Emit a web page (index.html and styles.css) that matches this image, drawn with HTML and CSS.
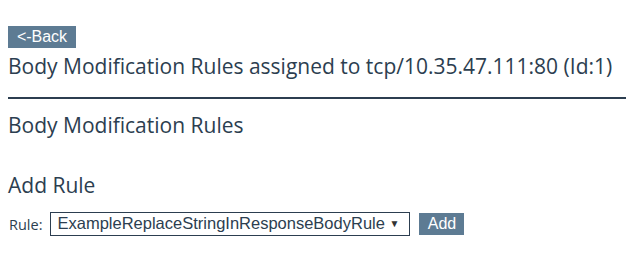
FILE: index.html
```html
<!DOCTYPE html>
<html>
<head>
<meta charset="utf-8">
<link rel="stylesheet" href="styles.css">
</head>
<body>
<div class="page">
  <div class="top"><button class="btn back">&lt;-Back</button></div>
  <h1 class="title">Body Modification Rules assigned to tcp/10.35.47.111:80 (Id:1)</h1>
  <div class="rule-line"></div>
  <h2 class="section">Body Modification Rules</h2>
  <h2 class="section add-title">Add Rule</h2>
  <div class="form-row">
    <label class="lbl">Rule:</label>
    <div class="select"><span class="sel-text">ExampleReplaceStringInResponseBodyRule</span><span class="arrow">▼</span></div>
    <button class="btn add">Add</button>
  </div>
</div>
</body>
</html>
```
FILE: styles.css
```css
html, body { margin: 0; padding: 0; background: #fff; }
body { font-family: "Open Sans", sans-serif; color: #2c3e50; }
.page { padding: 26px 0 0 8px; }
.top { display: flex; }
.btn {
  font-family: "Liberation Sans", Arial, sans-serif;
  background: #5d7b93;
  color: #fff;
  border: 0;
  border-radius: 0;
  height: 22px;
  padding: 0;
  font-size: 16px;
  line-height: 22px;
  cursor: pointer;
}
.back { width: 68px; }
.title {
  font-size: 21px;
  font-weight: normal;
  margin: 5px 0 0 0;
  line-height: 26px;
  white-space: nowrap;
}
.rule-line { height: 2px; background: #2c3e50; margin-top: 18px; }
.section {
  font-size: 21px;
  font-weight: normal;
  margin: 12.5px 0 0 0;
  line-height: 26px;
}
.add-title { margin-top: 34.7px; }
.form-row { display: flex; align-items: center; margin-top: 13.5px; }
.lbl { font-size: 14.5px; margin: 2px 8px 0 1px; }
.select {
  display: flex; align-items: center;
  border: 1px solid #2c3e50;
  height: 24px; box-sizing: border-box; width: 360px;
  padding: 0 10px 0 6px;
  font-family: "Liberation Sans", Arial, sans-serif;
  font-size: 16.5px; color: #2c3e50;
}
.sel-text { flex: 1; }
.arrow { font-size: 10px; color: #333; }
.add { width: 45px; margin-left: 9px; margin-top: 1px; }
```
